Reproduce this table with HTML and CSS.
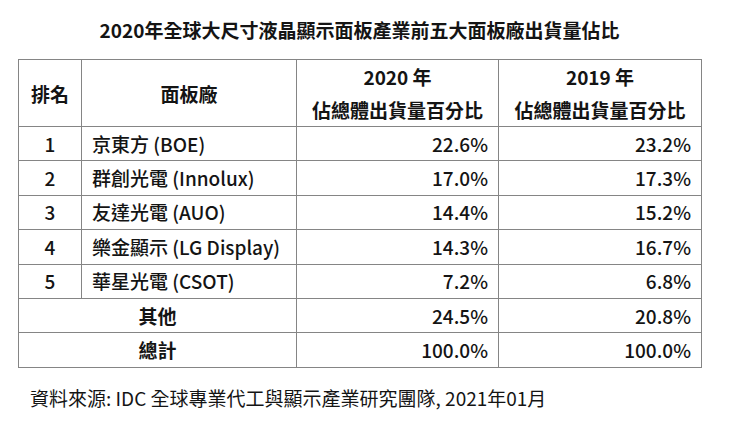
FILE: index.html
```html
<!DOCTYPE html>
<html lang="zh-Hant">
<head>
<meta charset="utf-8">
<link rel="stylesheet" href="styles.css">
</head>
<body>
<div class="page">
  <h1 class="title">2020年全球大尺寸液晶顯示面板產業前五大面板廠出貨量佔比</h1>
  <table class="share">
    <colgroup>
      <col class="c-rank"><col class="c-name"><col class="c-y20"><col class="c-y19">
    </colgroup>
    <thead>
      <tr class="head">
        <th>排名</th>
        <th>面板廠</th>
        <th>2020 年<br>佔總體出貨量百分比</th>
        <th>2019 年<br>佔總體出貨量百分比</th>
      </tr>
    </thead>
    <tbody>
      <tr><td class="rank">1</td><td class="name">京東方 (BOE)</td><td class="num">22.6%</td><td class="num">23.2%</td></tr>
      <tr><td class="rank">2</td><td class="name">群創光電 (Innolux)</td><td class="num">17.0%</td><td class="num">17.3%</td></tr>
      <tr><td class="rank">3</td><td class="name">友達光電 (AUO)</td><td class="num">14.4%</td><td class="num">15.2%</td></tr>
      <tr><td class="rank">4</td><td class="name">樂金顯示 (LG Display)</td><td class="num">14.3%</td><td class="num">16.7%</td></tr>
      <tr><td class="rank">5</td><td class="name">華星光電 (CSOT)</td><td class="num">7.2%</td><td class="num">6.8%</td></tr>
      <tr><td class="label" colspan="2">其他</td><td class="num">24.5%</td><td class="num">20.8%</td></tr>
      <tr class="last"><td class="label" colspan="2">總計</td><td class="num">100.0%</td><td class="num">100.0%</td></tr>
    </tbody>
  </table>
  <p class="source">資料來源: IDC 全球專業代工與顯示產業研究團隊, 2021年01月</p>
</div>
</body>
</html>
```

FILE: styles.css
```css
html, body {
  margin: 0;
  background: #ffffff;
}
body {
  font-family: "Noto Sans CJK TC", sans-serif;
  color: #141414;
}
.page {
  width: 683px;
  padding: 17px 0 0 18px;
}
.title {
  margin: 0 0 17px;
  font-size: 19px;
  line-height: 25px;
  font-weight: bold;
  text-align: center;
}
.share {
  width: 683px;
  border-collapse: collapse;
  table-layout: fixed;
}
.c-rank { width: 63px; }
.c-name { width: 215px; }
.c-y20 { width: 202px; }
.c-y19 { width: 203px; }
.share th,
.share td {
  border: 1px solid #858585;
  padding: 0 10px;
  font-size: 19px;
  vertical-align: middle;
}
.share th {
  font-weight: bold;
  line-height: 33px;
  text-align: center;
  height: 66px;
}
.share td {
  height: 33.4px;
  line-height: 24px;
  font-weight: 500;
}
.share .last td {
  height: 34px;
}
.rank {
  text-align: center;
}
.name {
  text-align: left;
}
.num {
  text-align: right;
}
.share .label {
  text-align: center;
  font-weight: bold;
}
.source {
  margin: 18px 0 0 12px;
  font-size: 19px;
  line-height: 24px;
}
```
